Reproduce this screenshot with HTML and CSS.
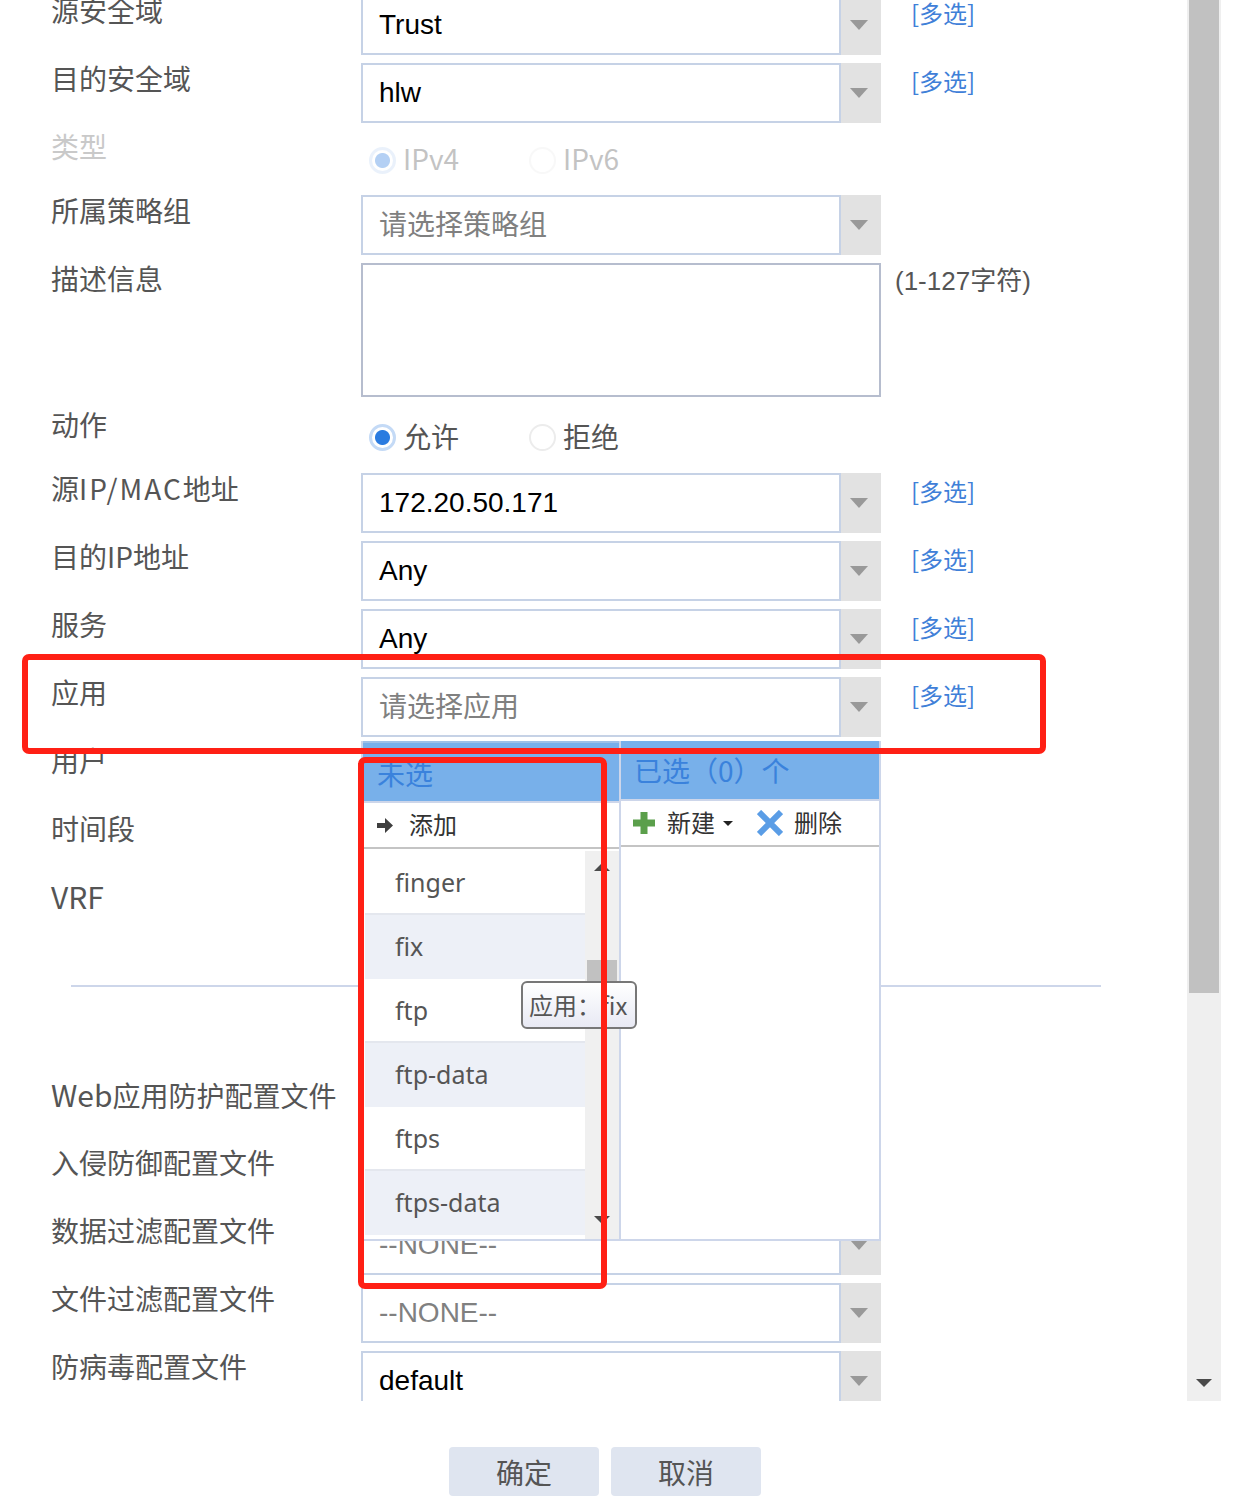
FILE: index.html
```html
<!DOCTYPE html>
<html lang="zh-CN">
<head>
    <meta charset="UTF-8">
    <title>新建安全策略</title>
    <link rel="stylesheet" href="styles.css">
</head>
<body>

<div class="page">
    <div class="form">
        <div class="row">
            <div class="label">源安全域</div>
            <div class="select"><div class="value">Trust</div><div class="drop"><i class="caret"></i></div></div>
            <a class="multi">[多选]</a>
        </div>
        <div class="row">
            <div class="label">目的安全域</div>
            <div class="select"><div class="value">hlw</div><div class="drop"><i class="caret"></i></div></div>
            <a class="multi">[多选]</a>
        </div>
        <div class="row radioRow">
            <div class="label off">类型</div>
            <div class="radios off">
                <span class="radio on"></span><span class="radioText latin">IPv4</span>
                <span class="radio"></span><span class="radioText latin">IPv6</span>
            </div>
        </div>
        <div class="row">
            <div class="label">所属策略组</div>
            <div class="select"><div class="value hint cjk">请选择策略组</div><div class="drop"><i class="caret"></i></div></div>
        </div>
        <div class="row descRow">
            <div class="label">描述信息</div>
            <div class="textarea"></div>
            <div class="note">(1-127字符)</div>
        </div>
        <div class="row radioRow">
            <div class="label">动作</div>
            <div class="radios">
                <span class="radio on"></span><span class="radioText">允许</span>
                <span class="radio"></span><span class="radioText">拒绝</span>
            </div>
        </div>
        <div class="row">
            <div class="label">源<span class="mac">IP/MAC</span>地址</div>
            <div class="select"><div class="value">172.20.50.171</div><div class="drop"><i class="caret"></i></div></div>
            <a class="multi">[多选]</a>
        </div>
        <div class="row">
            <div class="label">目的IP地址</div>
            <div class="select"><div class="value">Any</div><div class="drop"><i class="caret"></i></div></div>
            <a class="multi">[多选]</a>
        </div>
        <div class="row">
            <div class="label">服务</div>
            <div class="select"><div class="value">Any</div><div class="drop"><i class="caret"></i></div></div>
            <a class="multi">[多选]</a>
        </div>
        <div class="row">
            <div class="label">应用</div>
            <div class="select"><div class="value hint cjk">请选择应用</div><div class="drop"><i class="caret"></i></div></div>
            <a class="multi">[多选]</a>
        </div>
        <div class="row">
            <div class="label">用户</div>
            <div class="select"><div class="value"></div><div class="drop"></div></div>
        </div>
        <div class="row">
            <div class="label">时间段</div>
            <div class="select"><div class="value"></div><div class="drop"></div></div>
        </div>
        <div class="row">
            <div class="label"><span class="big">VRF</span></div>
            <div class="select"><div class="value"></div><div class="drop"></div></div>
        </div>

        <div class="line"></div>

        <div class="row">
            <div class="label"><span class="big">Web</span>应用防护配置文件</div>
            <div class="select"><div class="value hint">--NONE--</div><div class="drop"><i class="caret"></i></div></div>
        </div>
        <div class="row">
            <div class="label">入侵防御配置文件</div>
            <div class="select"><div class="value hint">--NONE--</div><div class="drop"><i class="caret"></i></div></div>
        </div>
        <div class="row">
            <div class="label">数据过滤配置文件</div>
            <div class="select"><div class="value hint">--NONE--</div><div class="drop"><i class="caret"></i></div></div>
        </div>
        <div class="row">
            <div class="label">文件过滤配置文件</div>
            <div class="select"><div class="value hint">--NONE--</div><div class="drop"><i class="caret"></i></div></div>
        </div>
        <div class="row">
            <div class="label">防病毒配置文件</div>
            <div class="select"><div class="value">default</div><div class="drop"><i class="caret"></i></div></div>
        </div>
    </div>

    <div class="pageBar">
        <div class="pageThumb"></div>
        <i class="arrowDown"></i>
    </div>

    <!-- 应用 下拉面板 -->
    <div class="picker">
        <div class="pickCol leftCol">
            <div class="pickHead">未选</div>
            <div class="pickTool">
                <svg class="icon" width="16" height="15" viewBox="0 0 16 15"><path d="M0 5h8V0l8 7.500-8 7.500v-5H0z" fill="#3f3f3f"/></svg>
                <span class="toolText addText">添加</span>
            </div>
            <div class="listWrap">
                <div class="list">
                    <div class="item">finger</div>
                    <div class="item alt">fix</div>
                    <div class="item">ftp</div>
                    <div class="item alt">ftp-data</div>
                    <div class="item">ftps</div>
                    <div class="item alt">ftps-data</div>
                </div>
                <div class="listBar">
                    <i class="arrowUp"></i>
                    <div class="listThumb"></div>
                    <i class="arrowDown"></i>
                </div>
            </div>
        </div>
        <div class="pickCol rightCol">
            <div class="pickHead">已选（0）个</div>
            <div class="pickTool">
                <svg class="icon" width="22" height="22" viewBox="0 0 22 22"><path d="M7.500 0h7v7.500H22v7h-7.500V22h-7v-7.500H0v-7h7.500z" fill="#5b9f4b"/></svg>
                <span class="toolText newText">新建</span>
                <i class="miniCaret"></i>
                <svg class="icon delIcon" width="26" height="26" viewBox="0 0 26 26"><path d="M2 2l22 22M24 2L2 24" stroke="#5a9de6" stroke-width="6"/></svg>
                <span class="toolText delText">删除</span>
            </div>
        </div>
    </div>

    <div class="tip">应用：fix</div>

    <!-- 截图上的红框标注 -->
    <div class="mark markRow"></div>
    <div class="mark markList"></div>
</div>

<div class="footer">
    <div class="btn">确定</div>
    <div class="btn">取消</div>
</div>

</body>
</html>
```

FILE: styles.css
```css
* {
    box-sizing: border-box;
}

body {
    margin: 0;
    background: #fff;
    color: #555;
    font-family: "Liberation Sans", "Noto Sans CJK SC", sans-serif;
}

.page {
    position: relative;
    display: flex;
    height: 1401px;
    overflow: hidden;
}

.form {
    width: 1187px;
    margin-top: -5px;
}

.row {
    display: grid;
    grid-template-columns: 310px 520px auto;
    height: 60px;
    margin-bottom: 8px;
    padding-left: 51px;
}

.radioRow {
    height: 56px;
}

.descRow {
    height: 134px;
    margin-bottom: 12px;
}

.label {
    font-family: "Noto Sans CJK SC", sans-serif;
    font-size: 28px;
    line-height: 30px;
    white-space: nowrap;
}

.label.off {
    color: #c9c9c9;
}

.mac {
    letter-spacing: 2px;
}

.big {
    font-size: 30px;
}

.select {
    display: flex;
    height: 60px;
}

.value {
    width: 480px;
    padding-left: 16px;
    border: 2px solid #c6d2e6;
    background: #fff;
    color: #000;
    font-family: "Liberation Sans", "Noto Sans CJK SC", sans-serif;
    font-size: 28px;
    line-height: 56px;
}

.value.hint {
    color: #808080;
}

.value.cjk {
    line-height: 58px;
}

.drop {
    display: flex;
    align-items: center;
    justify-content: center;
    width: 40px;
    padding-right: 4px;
    background: #e2e2e2;
}

.caret {
    border-top: 10px solid #999;
    border-left: 9px solid transparent;
    border-right: 9px solid transparent;
}

.multi {
    margin-left: 30px;
    color: #3f80d8;
    font-family: "Noto Sans CJK SC", sans-serif;
    font-size: 24px;
    line-height: 36px;
}

.textarea {
    border: 2px solid #b6bdce;
    background: #fff;
}

.note {
    margin-left: 14px;
    font-size: 26px;
    line-height: 36px;
    white-space: nowrap;
}

.radios {
    display: flex;
    align-items: center;
    padding-left: 8px;
}

.radios.off {
    opacity: 0.35;
}

.radio {
    width: 27px;
    height: 27px;
    border: 2px solid #ececec;
    border-radius: 50%;
    background: #fff;
}

.radio.on {
    border: 3px solid #c4daf6;
    background: radial-gradient(circle, #2a7be0 0, #2a7be0 7px, #fff 8px);
}

.radioText {
    width: 133px;
    padding: 0 0 2px 7px;
    font-family: "Noto Sans CJK SC", sans-serif;
    font-size: 28px;
    line-height: 54px;
}

.radioText.latin {
    padding-bottom: 4px;
}

.line {
    width: 1030px;
    height: 2px;
    margin: 44px 0 92px 71px;
    background: #cdd6ea;
}

/* 右侧滚动条 */
.pageBar {
    display: flex;
    flex-direction: column;
    align-items: center;
    width: 34px;
    padding: 0 2px 14px;
    background: #efefef;
}

.pageThumb {
    width: 30px;
    height: 993px;
    background: #c1c1c1;
}

.pageBar .arrowDown {
    margin-top: auto;
}

.arrowDown {
    border-top: 8px solid #4a4a4a;
    border-left: 8px solid transparent;
    border-right: 8px solid transparent;
}

.arrowUp {
    border-bottom: 8px solid #4a4a4a;
    border-left: 8px solid transparent;
    border-right: 8px solid transparent;
}

/* 下拉面板 */
.picker {
    position: absolute;
    left: 361px;
    top: 741px;
    display: flex;
    width: 520px;
    height: 500px;
    border-bottom: 2px solid #cdd6ea;
    background: #fff;
}

.pickCol {
    display: flex;
    flex-direction: column;
    width: 260px;
    font-family: "Noto Sans CJK SC", sans-serif;
}

.leftCol {
    border-left: 2px solid #cdd6ea;
    border-right: 2px solid #cdd6ea;
}

.rightCol {
    border-right: 2px solid #cdd6ea;
}

.pickHead {
    height: 60px;
    padding-left: 13px;
    border-bottom: 2px solid #cdd6ea;
    background: #78b0ea;
    color: #3a82dc;
    font-size: 28px;
    line-height: 58px;
}

.leftCol .pickHead {
    height: 62px;
    padding-left: 14px;
    border-top: 2px solid #9dc0e8;
    line-height: 60px;
}

.pickTool {
    display: flex;
    align-items: center;
    height: 46px;
    padding-left: 12px;
    border-bottom: 2px solid #c4c4c4;
}

.leftCol .pickTool {
    padding-left: 14px;
}

.toolText {
    padding-bottom: 4px;
    color: #333;
    font-size: 24px;
}

.addText {
    margin-left: 16px;
}

.newText {
    margin-left: 12px;
}

.miniCaret {
    margin-left: 8px;
    border-top: 5px solid #222;
    border-left: 5px solid transparent;
    border-right: 5px solid transparent;
}

.delIcon {
    margin-left: 24px;
}

.delText {
    margin-left: 11px;
}

.listWrap {
    display: flex;
    flex: 1;
    padding: 2px 0 0 2px;
}

.list {
    width: 220px;
}

.item {
    height: 64px;
    padding-left: 30px;
    border-bottom: 2px solid #e4e7ee;
    background: #fff;
    font-family: "Noto Sans", sans-serif;
    font-size: 25px;
    line-height: 62px;
}

.item.alt {
    border-bottom-color: #edf0f7;
    background: #edf0f7;
}

.listBar {
    display: flex;
    flex: 1;
    flex-direction: column;
    align-items: center;
    padding: 12px 0 15px;
    background: #f0f0f0;
}

.listThumb {
    width: 30px;
    height: 60px;
    margin: 89px 0 auto;
    background: #c1c1c1;
}

.tip {
    position: absolute;
    left: 521px;
    top: 981px;
    width: 116px;
    height: 48px;
    padding-left: 6px;
    border: 2px solid #777;
    border-radius: 6px;
    background: linear-gradient(#fff, #e8e9f4);
    font-family: "Noto Sans CJK SC", sans-serif;
    font-size: 24px;
    line-height: 44px;
    white-space: nowrap;
}

.mark {
    position: absolute;
    border: 6px solid #ff2015;
    border-radius: 7px;
}

.markRow {
    left: 22px;
    top: 654px;
    width: 1024px;
    height: 100px;
}

.markList {
    left: 358px;
    top: 757px;
    width: 249px;
    height: 532px;
}

.footer {
    display: flex;
    gap: 12px;
    height: 103px;
    padding: 46px 0 0 449px;
}

.btn {
    width: 150px;
    height: 49px;
    border-radius: 4px;
    background: #dfe5f0;
    font-family: "Noto Sans CJK SC", sans-serif;
    font-size: 28px;
    line-height: 50px;
    text-align: center;
}
```
